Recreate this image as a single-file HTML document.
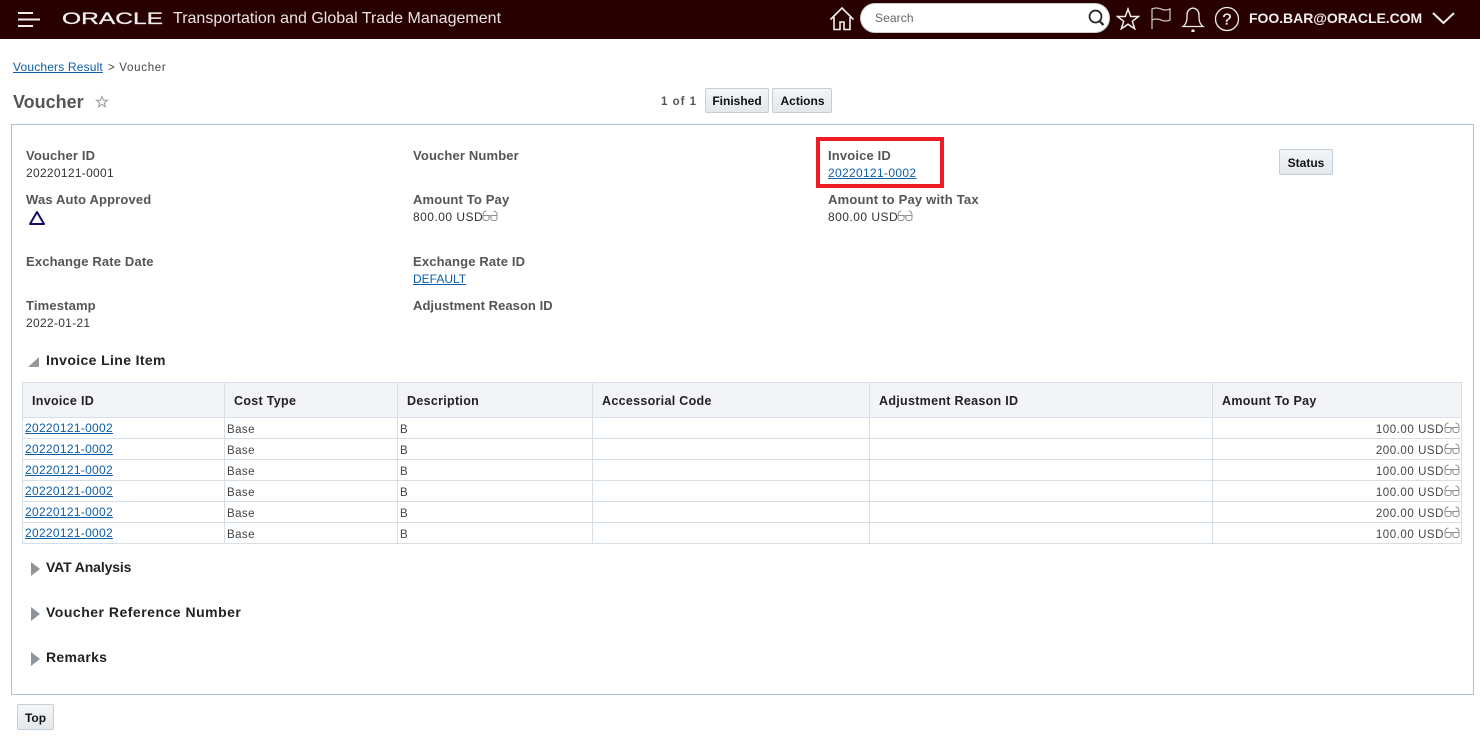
<!DOCTYPE html>
<html><head><meta charset="utf-8"><title>Voucher</title>
<style>
html,body{margin:0;padding:0;background:#fff;width:1480px;height:736px;overflow:hidden}
body{font-family:"Liberation Sans",Arial,sans-serif;position:relative;color:#333}
.a{position:absolute;white-space:nowrap}
.l{font-size:13px;font-weight:bold;color:#555;letter-spacing:.15px;line-height:16px}
.v{font-size:12px;color:#333;line-height:16px;letter-spacing:.3px}
a{color:#0f5ea8;text-decoration:underline}
.btn{position:absolute;box-sizing:border-box;background:linear-gradient(#f3f5f7,#e4e8ea);border:1px solid #c4ced7;border-radius:2px;font-size:12px;font-weight:bold;color:#111;text-align:center;line-height:24px;height:25px}
.h{font-size:14px;font-weight:bold;color:#222;line-height:18px}
table{position:absolute;left:22px;top:382px;width:1440px;border-collapse:collapse;table-layout:fixed}
th,td{border:1px solid #d6dfe6;padding:0;white-space:nowrap;overflow:hidden}
th{height:35px;box-sizing:border-box;background:#f2f4f8;font-size:12.5px;font-weight:bold;color:#222;text-align:left;padding:2px 0 0 9px;letter-spacing:.3px}
td{height:21px;box-sizing:border-box;font-size:11.5px;color:#444;padding:2px 0 0 2px;letter-spacing:.42px;line-height:17px}
td a{font-size:12px;letter-spacing:.3px}
td span{position:relative;top:1px}
td.r{text-align:right;padding-right:1px;padding-left:0}
td.r span{letter-spacing:.55px}
svg.g{width:16px;height:13px;vertical-align:-1px;display:inline-block}
td svg.g{position:relative;top:1px}
</style></head><body>
<svg width="0" height="0" style="position:absolute"><defs><symbol id="gl" viewBox="0 0 16 13"><g fill="none" stroke="#8f8f8f" stroke-width="1"><path d="M1 6.500h6v3a2 2 0 0 1-2 2H3a2 2 0 0 1-2-2zM9 6.500h6v3a2 2 0 0 1-2 2h-2a2 2 0 0 1-2-2zM7 7h2M1 6.500q0-4.500 3.500-4.500M15 6.500q0-4.500-3.500-4.500"/></g></symbol></defs></svg>

<div class="a" style="left:0;top:0;width:1480px;height:39px;background:#280000"></div>
<svg class="a" style="left:17px;top:11px" width="24" height="16"><path d="M1 2h15M1 8.500h22M1 15h15" stroke="#f2eeee" stroke-width="2"/></svg>
<svg class="a" style="left:60px;top:8px" width="108" height="22"><text x="2" y="16" font-family="Liberation Sans" font-size="17" fill="#f0eeee" stroke="#f0eeee" stroke-width=".3" textLength="101" lengthAdjust="spacingAndGlyphs">ORACLE</text></svg>
<div class="a" style="left:173px;top:9px;font-size:16px;line-height:19px;color:#e9e4e4;letter-spacing:.01px">Transportation and Global Trade Management</div>

<svg class="a" style="left:829px;top:6px" width="26" height="25" fill="none" stroke="#f4f0f0" stroke-width="1.600"><path d="M1.500 13.500L13 2l11.500 11.500M5 11v12.500h6V16h4v7.500h6V11"/></svg>
<div class="a" style="left:860px;top:3px;width:250px;height:30px;box-sizing:border-box;background:#fff;border-radius:15px;border:1px solid #ccc"></div>
<div class="a" style="left:875px;top:11px;font-size:12px;line-height:15px;color:#666;letter-spacing:.1px">Search</div>
<svg class="a" style="left:1087px;top:8px" width="20" height="20" fill="none" stroke="#222" stroke-width="1.700"><circle cx="8.500" cy="8.500" r="6"/><path d="M12.500 13l4 4" stroke-width="2.200"/></svg>
<svg class="a" style="left:1116px;top:7px" width="24" height="23" fill="none" stroke="#f4f0f0" stroke-width="1.500"><path d="M12 2l2.700 7.500h7.800l-6.200 4.800 2.400 7.500-6.700-4.600-6.700 4.600 2.400-7.500-6.200-4.800h7.800z"/></svg>
<svg class="a" style="left:1149px;top:6px" width="24" height="24" fill="none" stroke="#c9c2c2" stroke-width="1.300"><path d="M3 23V3q4-2 9 0t9 0v11q-4 2-9 0t-9 0"/></svg>
<svg class="a" style="left:1181px;top:4px" width="24" height="28" fill="none" stroke="#f0eeee" stroke-width="1.300"><path d="M2 22.500q4-3 4-9V11q0-6 6-7 6 1 6 7v2.500q0 6 4 9z"/><circle cx="12" cy="27" r="1" fill="#f0eeee"/></svg>
<svg class="a" style="left:1214px;top:6px" width="26" height="26"><circle cx="13" cy="13" r="11.500" fill="none" stroke="#f0eeee" stroke-width="1.300"/><text x="13" y="18.500" text-anchor="middle" font-family="Liberation Sans" font-size="16" fill="#f0eeee" stroke="#f0eeee" stroke-width=".3">?</text></svg>
<div class="a" style="left:1249px;top:10px;font-size:14px;line-height:17px;font-weight:bold;color:#f2eeee;letter-spacing:-.04px">FOO.BAR@ORACLE.COM</div>
<svg class="a" style="left:1431px;top:11px" width="25" height="15" fill="none" stroke="#f2eeee" stroke-width="2"><path d="M2 2l10.500 10L23 2"/></svg>

<div class="a v" style="left:13px;top:59px;letter-spacing:.17px"><a href="#">Vouchers Result</a></div>
<div class="a" style="left:108px;top:60px;font-size:11.500px;line-height:16px;color:#444;letter-spacing:.7px">&gt; Voucher</div>
<div class="a" style="left:13px;top:92px;font-size:18px;line-height:21px;font-weight:bold;color:#555">Voucher</div>
<svg class="a" style="left:95px;top:95px" width="14" height="14" fill="none" stroke="#999" stroke-width="1"><path d="M7 1.500l1.500 3.800h4l-3.200 2.500 1.200 4-3.500-2.400-3.500 2.400 1.200-4L1.500 5.300h4z"/></svg>

<div class="a" style="left:661px;top:94px;font-size:11.500px;font-weight:bold;line-height:16px;color:#555;letter-spacing:1px">1 of 1</div>
<div class="btn" style="left:705px;top:88px;width:64px">Finished</div>
<div class="btn" style="left:772px;top:88px;width:60px;padding-left:1px">Actions</div>

<div class="a" style="left:11px;top:124px;width:1463px;height:571px;box-sizing:border-box;border:1px solid #a6c3de"></div>

<div class="a l" style="left:26px;top:148px">Voucher ID</div>
<div class="a v" style="left:26px;top:165px">20220121-0001</div>
<div class="a l" style="left:26px;top:192px">Was Auto Approved</div>
<svg class="a" style="left:28px;top:210px" width="18" height="16" fill="none" stroke="#12126e" stroke-width="2" stroke-linejoin="round"><path d="M9 2L2 14h14z"/></svg>
<div class="a l" style="left:26px;top:254px">Exchange Rate Date</div>
<div class="a l" style="left:26px;top:298px">Timestamp</div>
<div class="a v" style="left:26px;top:315px">2022-01-21</div>

<div class="a l" style="left:413px;top:148px">Voucher Number</div>
<div class="a l" style="left:413px;top:192px">Amount To Pay</div>
<div class="a v" style="left:413px;top:209px;letter-spacing:.48px">800.00 USD<svg class="g" style="margin-left:-1px"><use href="#gl"/></svg></div>
<div class="a l" style="left:413px;top:254px">Exchange Rate ID</div>
<div class="a v" style="left:413px;top:271px;letter-spacing:0"><a href="#">DEFAULT</a></div>
<div class="a l" style="left:413px;top:298px;letter-spacing:.05px">Adjustment Reason ID</div>

<div class="a" style="left:816px;top:137px;width:128px;height:51px;box-sizing:border-box;border:4px solid #ee1c25"></div>
<div class="a l" style="left:828px;top:148px">Invoice ID</div>
<div class="a v" style="left:828px;top:165px;letter-spacing:.33px"><a href="#">20220121-0002</a></div>
<div class="a l" style="left:828px;top:192px;letter-spacing:.2px">Amount to Pay with Tax</div>
<div class="a v" style="left:828px;top:209px;letter-spacing:.48px">800.00 USD<svg class="g" style="margin-left:-1px"><use href="#gl"/></svg></div>
<div class="btn" style="left:1279px;top:149px;width:54px;height:26px;line-height:26px">Status</div>

<svg class="a" style="left:28px;top:356px" width="12" height="12"><path d="M11 1v10H0z" fill="#999"/></svg>
<div class="a h" style="left:46px;top:351px;letter-spacing:.37px">Invoice Line Item</div>

<table>
<colgroup><col style="width:202px"><col style="width:173px"><col style="width:195px"><col style="width:277px"><col style="width:343px"><col style="width:249px"></colgroup>
<tr><th>Invoice ID</th><th>Cost Type</th><th>Description</th><th>Accessorial Code</th><th>Adjustment Reason ID</th><th>Amount To Pay</th></tr>
<tr><td><a href="#">20220121-0002</a></td><td><span>Base</span></td><td><span>B</span></td><td></td><td></td><td class="r"><span>100.00 USD</span><svg class="g"><use href="#gl"/></svg></td></tr>
<tr><td><a href="#">20220121-0002</a></td><td><span>Base</span></td><td><span>B</span></td><td></td><td></td><td class="r"><span>200.00 USD</span><svg class="g"><use href="#gl"/></svg></td></tr>
<tr><td><a href="#">20220121-0002</a></td><td><span>Base</span></td><td><span>B</span></td><td></td><td></td><td class="r"><span>100.00 USD</span><svg class="g"><use href="#gl"/></svg></td></tr>
<tr><td><a href="#">20220121-0002</a></td><td><span>Base</span></td><td><span>B</span></td><td></td><td></td><td class="r"><span>100.00 USD</span><svg class="g"><use href="#gl"/></svg></td></tr>
<tr><td><a href="#">20220121-0002</a></td><td><span>Base</span></td><td><span>B</span></td><td></td><td></td><td class="r"><span>200.00 USD</span><svg class="g"><use href="#gl"/></svg></td></tr>
<tr><td><a href="#">20220121-0002</a></td><td><span>Base</span></td><td><span>B</span></td><td></td><td></td><td class="r"><span>100.00 USD</span><svg class="g"><use href="#gl"/></svg></td></tr>
</table>

<svg class="a" style="left:31px;top:562px" width="9" height="14"><path d="M0 0l9 7-9 7z" fill="#8f9499"/></svg>
<div class="a h" style="left:46px;top:558px;letter-spacing:-.13px">VAT Analysis</div>
<svg class="a" style="left:31px;top:607px" width="9" height="14"><path d="M0 0l9 7-9 7z" fill="#8f9499"/></svg>
<div class="a h" style="left:46px;top:603px;letter-spacing:.5px">Voucher Reference Number</div>
<svg class="a" style="left:31px;top:652px" width="9" height="14"><path d="M0 0l9 7-9 7z" fill="#8f9499"/></svg>
<div class="a h" style="left:46px;top:648px;letter-spacing:.3px">Remarks</div>

<div class="btn" style="left:17px;top:704px;width:37px;height:26px;line-height:26px">Top</div>
</body></html>
